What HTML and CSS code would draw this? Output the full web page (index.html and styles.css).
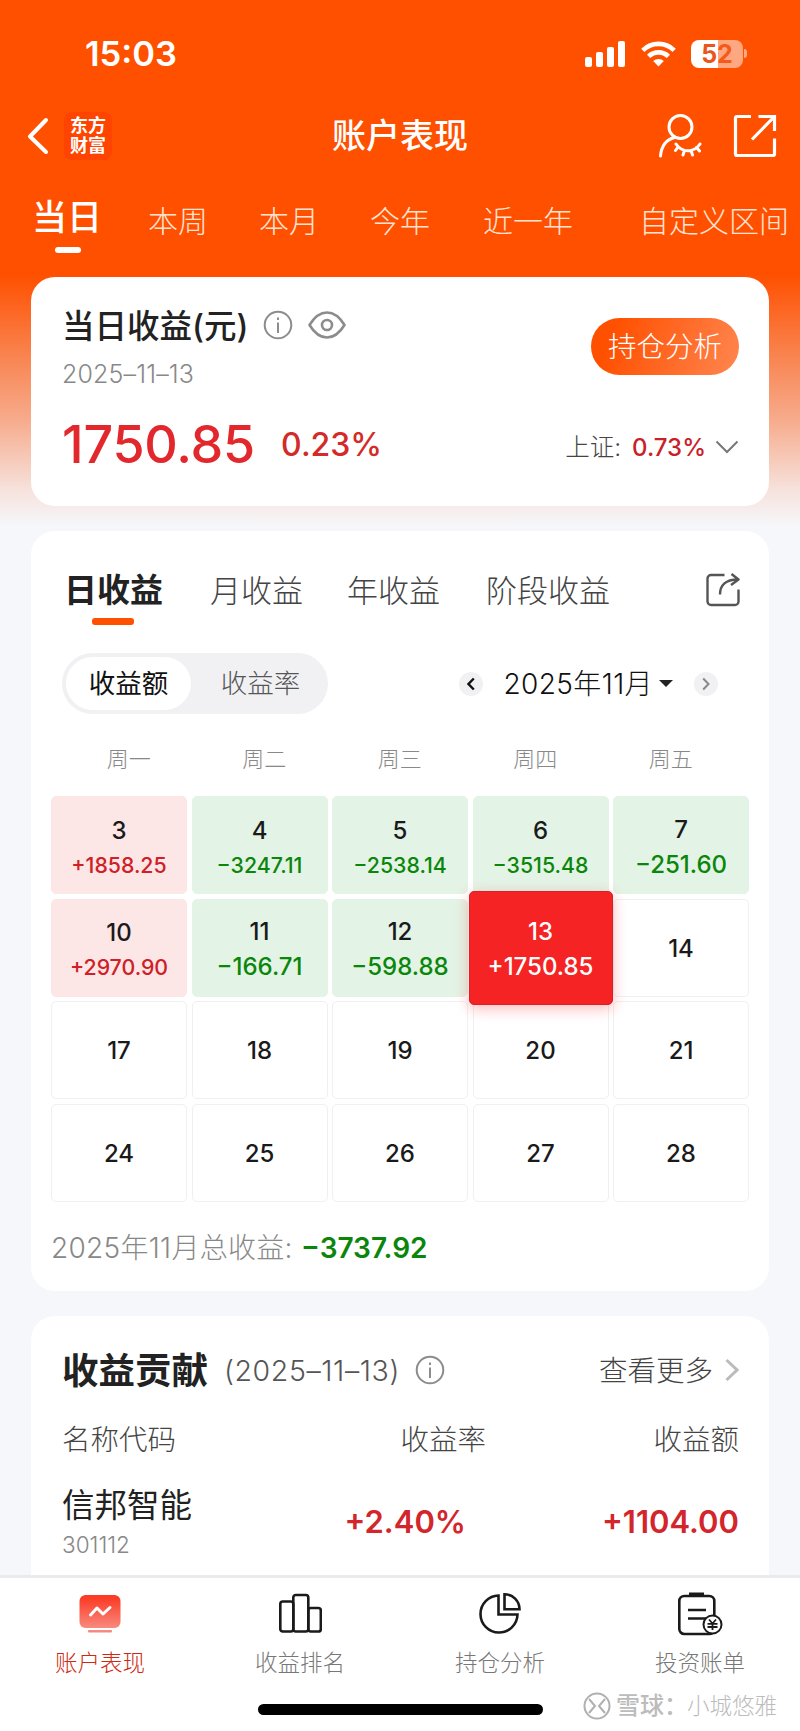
FILE: index.html
```html
<!DOCTYPE html>
<html lang="zh-CN">
<head>
  <meta charset="UTF-8">
  <meta name="viewport" content="width=device-width, initial-scale=1.0">
  <title>账户表现</title>
  <link rel="stylesheet" href="styles.css">
</head>
<body>
  <div class="page">

    <!-- Status bar -->
    <div class="status-bar">
      <span class="time">15:03</span>
      <div class="status-icons">
        <svg class="signal" width="41" height="26" viewBox="0 0 41 26" fill="#fff">
          <rect x="0" y="16" width="7" height="10" rx="2"/>
          <rect x="11" y="11" width="7" height="15" rx="2"/>
          <rect x="22" y="6" width="7" height="20" rx="2"/>
          <rect x="33" y="0" width="7" height="26" rx="2"/>
        </svg>
        <svg class="wifi" width="35" height="26" viewBox="0 0 35 26" fill="none" stroke="#fff" stroke-width="4.6">
          <path d="M1.8 9.3a22.5 22.5 0 0 1 31.4 0"/>
          <path d="M7.6 15.4a14.3 14.3 0 0 1 19.8 0"/>
          <path d="M17.5 25.5l-5.3-5.4a7.6 7.6 0 0 1 10.6 0z" fill="#fff" stroke="none"/>
        </svg>
        <div class="battery"><span>5</span><span class="low">2</span></div>
        <i class="battery-tip"></i>
      </div>
    </div>

    <!-- Title bar -->
    <header class="header">
      <div class="header-left">
        <svg width="22" height="38" viewBox="0 0 22 38" fill="none" stroke="#fff" stroke-width="4" stroke-linecap="round" stroke-linejoin="round">
          <path d="M19 3L3 19.5 19 35"/>
        </svg>
        <div class="logo">东方<br>财富</div>
      </div>
      <h1>账户表现</h1>
      <div class="header-right">
        <svg width="44" height="46" viewBox="0 0 44 46" fill="none" stroke="#fff" stroke-width="3" stroke-linecap="round">
          <circle cx="22.5" cy="14" r="11.5"/>
          <path d="M2.5 43C3.5 32 9 26.5 16.5 24.5"/>
          <path d="M18 31c6 9 18 9 24 0M20 34l-2.5 3.5M26.5 37.5L25 42M33 37.5l1.5 4.5M38.5 34.5l3 3.5"/>
        </svg>
        <svg width="44" height="44" viewBox="0 0 44 44" fill="none" stroke="#fff" stroke-width="3.2">
          <path d="M18 2.5H4A1.500 1.500 0 0 0 2.500 4v36A1.500 1.500 0 0 0 4 41.500h36a1.500 1.500 0 0 0 1.500-1.500V24.500"/>
          <path d="M25.500 2.500h16V17M41 3L19 25.500"/>
        </svg>
      </div>
    </header>

    <!-- Period tabs -->
    <nav class="period-tabs">
      <a class="active">当日</a>
      <a>本周</a>
      <a>本月</a>
      <a>今年</a>
      <a class="year">近一年</a>
      <a class="custom">自定义区间</a>
    </nav>

    <main class="content">
      <!-- Profit summary -->
      <section class="card summary">
        <div class="summary-left">
          <div class="summary-title">
            <span>当日收益(元)</span>
            <svg class="info" width="30" height="30" viewBox="0 0 30 30" fill="none" stroke="#8c8c8c" stroke-width="2">
              <circle cx="15" cy="15" r="13.3"/>
              <path d="M15 12.5V23M15 7.5v2.5"/>
            </svg>
            <svg class="eye" width="38" height="28" viewBox="0 0 38 28" fill="none" stroke="#8c8c8c" stroke-width="2.6" stroke-linejoin="round">
              <path d="M1.5 14C7 5 13 1.5 19 1.5S31 5 36.5 14C31 23 25 26.5 19 26.5S7 23 1.5 14z"/>
              <circle cx="19" cy="14" r="5"/>
            </svg>
          </div>
          <div class="date">2025–11–13</div>
          <div class="amount-row">
            <span class="amount">1750.85</span>
            <span class="percent">0.23%</span>
          </div>
        </div>
        <div class="summary-right">
          <a class="btn-analysis">持仓分析</a>
          <div class="index-row">
            <span>上证:</span>
            <b>0.73%</b>
            <svg width="24" height="14" viewBox="0 0 24 14" fill="none" stroke="#777" stroke-width="2"><path d="M1.5 1.5L12 12 22.5 1.5"/></svg>
          </div>
        </div>
      </section>

      <!-- Profit calendar -->
      <section class="card calendar">
        <div class="profit-tabs">
          <a class="active">日收益</a>
          <a class="month">月收益</a>
          <a class="annual">年收益</a>
          <a class="stage">阶段收益</a>
          <svg class="share" width="34" height="34" viewBox="0 0 34 34" fill="none" stroke="#555" stroke-width="2.4" stroke-linejoin="round">
            <path d="M18.5 2H5a3.5 3.5 0 0 0-3.5 3.5v23A3.5 3.5 0 0 0 5 32h24a3.5 3.5 0 0 0 3.5-3.5V16.5"/>
            <path d="M14 21.5C14 12 20 6.5 31.5 6.5M25.5 1l7 5.500-7.500 5.500"/>
          </svg>
        </div>

        <div class="controls">
          <div class="toggle">
            <span class="on">收益额</span>
            <span>收益率</span>
          </div>
          <div class="month-picker">
            <span class="arrow"><svg width="8" height="14" viewBox="0 0 8 14" fill="none" stroke="#111" stroke-width="2.4"><path d="M6.8 1.5L1.5 7l5.3 5.5"/></svg></span>
            <span class="month-text">2025年11月</span>
            <i class="caret"></i>
            <span class="arrow next"><svg width="8" height="14" viewBox="0 0 8 14" fill="none" stroke="#888" stroke-width="2"><path d="M1.2 1.5L6.5 7l-5.3 5.5"/></svg></span>
          </div>
        </div>

        <div class="weekdays">
          <span>周一</span><span>周二</span><span>周三</span><span>周四</span><span>周五</span>
        </div>

        <div class="days">
          <div class="day up"><b>3</b><span>+1858.25</span></div>
          <div class="day down"><b>4</b><span>−3247.11</span></div>
          <div class="day down"><b>5</b><span>−2538.14</span></div>
          <div class="day down"><b>6</b><span>−3515.48</span></div>
          <div class="day down big"><b>7</b><span>−251.60</span></div>
          <div class="day up"><b>10</b><span>+2970.90</span></div>
          <div class="day down big"><b>11</b><span>−166.71</span></div>
          <div class="day down big"><b>12</b><span>−598.88</span></div>
          <div class="day selected big"><b>13</b><span>+1750.85</span></div>
          <div class="day"><b>14</b></div>
          <div class="day"><b>17</b></div>
          <div class="day"><b>18</b></div>
          <div class="day"><b>19</b></div>
          <div class="day"><b>20</b></div>
          <div class="day"><b>21</b></div>
          <div class="day"><b>24</b></div>
          <div class="day"><b>25</b></div>
          <div class="day"><b>26</b></div>
          <div class="day"><b>27</b></div>
          <div class="day"><b>28</b></div>
        </div>

        <div class="total">2025年11月总收益: <b>−3737.92</b></div>
      </section>

      <!-- Contribution list -->
      <section class="card contribution">
        <div class="contribution-head">
          <h2>收益贡献</h2>
          <span class="head-date">(2025–11–13)</span>
          <svg class="info" width="30" height="30" viewBox="0 0 30 30" fill="none" stroke="#8c8c8c" stroke-width="2">
            <circle cx="15" cy="15" r="13.3"/>
            <path d="M15 12.5V23M15 7.5v2.5"/>
          </svg>
          <a class="more">查看更多</a>
          <svg width="14" height="24" viewBox="0 0 14 24" fill="none" stroke="#bbb" stroke-width="3"><path d="M1.5 2L12 12 1.5 22"/></svg>
        </div>
        <div class="row row-head">
          <span>名称代码</span><span>收益率</span><span>收益额</span>
        </div>
        <div class="row row-stock">
          <div>
            <div class="stock-name">信邦智能</div>
            <div class="stock-code">301112</div>
          </div>
          <b>+2.40%</b>
          <b>+1104.00</b>
        </div>
      </section>
    </main>

    <!-- Bottom navigation -->
    <footer class="tab-bar">
      <a class="active">
        <svg width="44" height="44" viewBox="0 0 44 44">
          <defs>
            <linearGradient id="red" x1="0" y1="0" x2="0" y2="1">
              <stop offset="0.1" stop-color="#fb3d27"/>
              <stop offset="1" stop-color="#f88a7e"/>
            </linearGradient>
          </defs>
          <rect x="1.5" y="3" width="41" height="33" rx="6" fill="url(#red)"/>
          <path d="M12.5 23l6.5-7 6 6 7-6.5" fill="none" stroke="#fff" stroke-width="3" stroke-linecap="round" stroke-linejoin="round"/>
          <rect x="10" y="38" width="24" height="2.6" rx="1" fill="#f58a80"/>
        </svg>
        <span>账户表现</span>
      </a>
      <a>
        <svg width="44" height="44" viewBox="0 0 44 44" fill="none" stroke="#1a1a1a" stroke-width="2.6">
          <rect x="2.3" y="9.5" width="13" height="30" rx="2.5"/>
          <rect x="15.3" y="3" width="15" height="36.5" rx="2.5"/>
          <rect x="30.3" y="16" width="12.5" height="23.5" rx="2.5"/>
        </svg>
        <span>收益排名</span>
      </a>
      <a>
        <svg width="44" height="44" viewBox="0 0 44 44" fill="none" stroke="#1a1a1a" stroke-width="2.6">
          <path d="M20.5 3.5A18.5 18.5 0 1 0 39.5 22.5H20.5z"/>
          <path d="M26.5 2.3v15h15A15 15 0 0 0 26.5 2.3z"/>
        </svg>
        <span>持仓分析</span>
      </a>
      <a>
        <svg width="46" height="44" viewBox="0 0 46 44" fill="none" stroke="#1a1a1a" stroke-width="2.6">
          <rect x="2.3" y="4" width="35" height="38" rx="5"/>
          <path d="M12 2.5h15" stroke-width="4"/>
          <path d="M11 18h18M11 26.5h18"/>
          <circle cx="35.5" cy="32.5" r="9" fill="#fff" stroke-width="2"/>
          <path d="M32 27.5l3.5 4 3.5-4M35.5 31.5V38M30.5 31.8h10M30.5 35h10" stroke-width="1.8"/>
        </svg>
        <span>投资账单</span>
      </a>
      <i class="home-indicator"></i>
      <div class="watermark">
        <svg width="28" height="28" viewBox="0 0 28 28" fill="none" stroke="#b0b0b0" stroke-width="2">
          <circle cx="14" cy="14" r="12.5"/>
          <path d="M6 7l6 7-6 7M22 7l-6 7 6 7"/>
        </svg>
        <b>雪球：</b><span>小城悠雅</span>
      </div>
    </footer>
  </div>
</body>
</html>
```

FILE: styles.css
```css
* {
  box-sizing: border-box;
}

body {
  margin: 0;
  background-color: #f6f7fa;
  font-family: Inter, "Noto Sans CJK SC", sans-serif;
  color: #222222;
}

h1, h2 {
  margin: 0;
}

svg {
  display: block;
  flex-shrink: 0;
}

a, span, b {
  white-space: nowrap;
}

.page {
  width: 800px;
  height: 1731px;
  display: flex;
  flex-direction: column;
  overflow: hidden;
  background: linear-gradient(to bottom, #ff5000 0, #ff5000 275px, #f9834f 355px, #f7ab8c 420px, #f6e2dc 490px, #f6f7fa 526px);
}

/* Status bar */
.status-bar {
  height: 107px;
  display: flex;
  align-items: center;
  justify-content: space-between;
  padding: 0 53px 0 85px;
  color: #ffffff;
}

.time {
  font-size: 34.5px;
  font-weight: 600;
}

.status-icons {
  display: flex;
  align-items: center;
}

.wifi {
  margin-left: 15px;
}

.battery {
  width: 52px;
  height: 28px;
  margin-left: 15px;
  border-radius: 8px;
  background: linear-gradient(to right, #ffffff 51%, #ffa780 51%);
  display: flex;
  align-items: center;
  justify-content: center;
  font-size: 25px;
  font-weight: 700;
  line-height: 28px;
  color: #e8561c;
}

.battery .low {
  color: #f65a1a;
}

.battery-tip {
  width: 3px;
  height: 9px;
  margin-left: 1px;
  border-radius: 0 4px 4px 0;
  background-color: #ffa780;
}

/* Title bar */
.header {
  height: 58px;
  display: grid;
  grid-template-columns: 1fr auto 1fr;
  align-items: center;
  padding: 0 23px;
  color: #ffffff;
}

.header h1 {
  font-size: 34px;
  font-weight: 500;
  line-height: 58px;
}

.header-left {
  display: flex;
  align-items: center;
  gap: 15px;
  padding-left: 4px;
}

.logo {
  width: 48px;
  height: 48px;
  padding-top: 4px;
  border-radius: 8px;
  background-color: #ff4400;
  font-size: 18px;
  font-weight: 700;
  line-height: 20px;
  text-align: center;
}

.header-right {
  display: flex;
  align-items: center;
  justify-content: flex-end;
  gap: 31px;
}

/* Period tabs */
.period-tabs {
  height: 112px;
  display: flex;
  align-items: flex-start;
  padding-left: 32px;
  color: #ffe3d3;
}

.period-tabs a {
  margin-left: 51px;
  padding-top: 34px;
  font-size: 30px;
  font-weight: 300;
  line-height: 44px;
}

.period-tabs .active {
  position: relative;
  margin: 0 -5px 0 0;
  padding-top: 28px;
  font-size: 35px;
  font-weight: 500;
  line-height: 48px;
  color: #ffffff;
}

.period-tabs .active::after {
  content: '';
  position: absolute;
  left: 23px;
  top: 82px;
  width: 26px;
  height: 6px;
  border-radius: 3px;
  background-color: #ffffff;
}

.period-tabs .year {
  margin-left: 53px;
}

.period-tabs .custom {
  margin-left: 66px;
}

/* Cards */
.content {
  flex: 1;
  min-height: 0;
  display: flex;
  flex-direction: column;
  gap: 25px;
  padding: 0 31px;
}

.card {
  background-color: #ffffff;
  border-radius: 24px;
  flex-shrink: 0;
}

/* Profit summary */
.summary {
  height: 229px;
  display: flex;
  justify-content: space-between;
  padding: 24px 30px 0 31px;
}

.summary-title {
  display: flex;
  align-items: center;
  height: 48px;
  font-size: 32.5px;
  font-weight: 500;
}

.summary-title span {
  padding-bottom: 4px;
}

.summary-title .info {
  margin-left: 15px;
}

.summary-title .eye {
  margin-left: 15px;
}

.date {
  height: 32px;
  margin-top: 9px;
  font-size: 25px;
  font-weight: 300;
  line-height: 32px;
  letter-spacing: 0.15px;
  color: #888888;
}

.amount-row {
  display: flex;
  align-items: center;
  margin-top: 23px;
  line-height: 64px;
  color: #e2282c;
}

.amount {
  font-size: 52px;
  font-weight: 500;
  letter-spacing: -0.2px;
}

.percent {
  margin-left: 26px;
  font-size: 32px;
  font-weight: 500;
  color: #d32a2a;
}

.summary-right {
  display: flex;
  flex-direction: column;
  align-items: flex-end;
}

.btn-analysis {
  width: 148px;
  height: 57px;
  margin-top: 17px;
  border-radius: 29px;
  background: linear-gradient(110deg, #ff5000 15%, #ff8650 100%);
  font-size: 28.5px;
  font-weight: 300;
  line-height: 57px;
  text-align: center;
  color: #ffffff;
}

.index-row {
  display: flex;
  align-items: center;
  height: 36px;
  margin-top: 54px;
  font-size: 24.5px;
  font-weight: 300;
  color: #444444;
}

.index-row span {
  padding-bottom: 3px;
}

.index-row b {
  margin: 0 9px 0 11px;
  font-size: 24px;
  font-weight: 500;
  color: #c9202a;
}

/* Profit calendar */
.calendar {
  height: 760px;
}

.profit-tabs {
  display: flex;
  align-items: center;
  height: 118px;
  padding: 0 29px 0 33px;
  font-size: 31px;
  font-weight: 300;
  color: #444444;
}

.profit-tabs a {
  padding-bottom: 4px;
}

.profit-tabs .active {
  position: relative;
  font-size: 33px;
  font-weight: 700;
  color: #222222;
}

.profit-tabs .active::after {
  content: '';
  position: absolute;
  left: 28px;
  bottom: -9px;
  width: 42px;
  height: 7px;
  border-radius: 3px;
  background-color: #ff5000;
}

.profit-tabs .month {
  margin-left: 47px;
}

.profit-tabs .annual {
  margin-left: 44px;
}

.profit-tabs .stage {
  margin-left: 46px;
}

.profit-tabs .share {
  margin-left: auto;
}

.controls {
  display: flex;
  align-items: center;
  justify-content: space-between;
  margin: 4px 51px 0 31px;
}

.toggle {
  width: 266px;
  height: 61px;
  display: flex;
  padding: 4px;
  border-radius: 31px;
  background-color: #f1f1f4;
  font-size: 26.5px;
  font-weight: 300;
  line-height: 53px;
  color: #555555;
}

.toggle span {
  flex: 1;
  padding-left: 6px;
  text-align: center;
}

.toggle .on {
  flex: none;
  width: 125px;
  padding: 0;
  border-radius: 27px;
  background-color: #ffffff;
  font-weight: 400;
  color: #111111;
}

.month-picker {
  display: flex;
  align-items: center;
  font-size: 28px;
  font-weight: 300;
  color: #111111;
}

.arrow {
  width: 24px;
  height: 24px;
  display: flex;
  align-items: center;
  justify-content: center;
  border-radius: 50%;
  background-color: #f1f1f4;
}

.month-text {
  margin-left: 20px;
  padding-bottom: 3px;
  letter-spacing: 0.4px;
}

.caret {
  margin: 0 21px 0 6px;
  border: 7px solid transparent;
  border-top: 7px solid #222222;
  border-bottom: 0;
}

.weekdays {
  display: grid;
  grid-template-columns: repeat(5, 135.5px);
  margin: 29px 0 0 30px;
  font-size: 22px;
  font-weight: 300;
  line-height: 32px;
  text-align: center;
  color: #888888;
}

.days {
  display: grid;
  grid-template-columns: repeat(5, 1fr);
  grid-auto-rows: 98px;
  gap: 4.5px;
  margin: 21px 20px 0;
}

.day {
  display: flex;
  flex-direction: column;
  align-items: center;
  justify-content: center;
  padding-top: 2px;
  border: 1px solid #f0f0f1;
  border-radius: 5px;
  background-color: #ffffff;
}

.day b {
  font-size: 24px;
  font-weight: 500;
  line-height: 34px;
  color: #1a1a1a;
}

.day span {
  font-size: 21.3px;
  font-weight: 500;
  line-height: 34px;
}

.day.big span {
  font-size: 24px;
  line-height: 36px;
}

.day.up {
  padding-top: 5px;
  border-color: #fde6e6;
  background-color: #fde6e6;
  color: #cf2027;
}

.day.down {
  padding-top: 5px;
  border-color: #e3f3e5;
  background-color: #e3f3e5;
  color: #0a860a;
}

.day.selected {
  position: relative;
  z-index: 1;
  margin: -8px -4px;
  padding-top: 4px;
  border-color: #d92028;
  background-color: #f52324;
  box-shadow: 0 4px 14px rgba(245, 35, 36, 0.3);
  color: #ffffff;
}

.day.selected b {
  color: #ffffff;
}

.total {
  margin: 26px 0 0 20px;
  font-size: 28px;
  font-weight: 300;
  line-height: 40px;
  letter-spacing: 0.3px;
  color: #888888;
}

.total b {
  font-weight: 600;
  letter-spacing: 0;
  color: #0a860a;
}

/* Contribution list */
.contribution {
  height: 320px;
  padding: 0 30px 0 31px;
}

.contribution-head {
  display: flex;
  align-items: center;
  height: 108px;
}

.contribution-head h2 {
  padding-bottom: 4px;
  font-size: 36.5px;
  font-weight: 700;
}

.head-date {
  margin-left: 16px;
  font-size: 28.5px;
  font-weight: 300;
  letter-spacing: 0.6px;
  color: #555555;
}

.contribution-head .info {
  margin-left: 15px;
}

.contribution-head .more {
  margin: 0 12px 0 auto;
  padding-bottom: 4px;
  font-size: 28.5px;
  font-weight: 300;
  color: #444444;
}

.row {
  display: grid;
  align-items: center;
}

.row > :nth-child(n+2) {
  text-align: right;
}

.row-head {
  grid-template-columns: 1fr 197px 253px;
  margin-top: -4px;
  font-size: 28.5px;
  font-weight: 300;
  line-height: 40px;
  color: #444444;
}

.row-stock {
  grid-template-columns: 1fr 197px 273px;
  margin-top: 22px;
}

.row-stock b {
  font-size: 31px;
  font-weight: 600;
  color: #d3252c;
}

.stock-name {
  font-size: 32.5px;
  line-height: 48px;
}

.stock-code {
  font-size: 22.5px;
  font-weight: 300;
  line-height: 30px;
  color: #888888;
}

/* Bottom navigation */
.tab-bar {
  position: relative;
  height: 156px;
  flex-shrink: 0;
  display: grid;
  grid-template-columns: repeat(4, 1fr);
  border-top: 3px solid #ebebed;
  background-color: #ffffff;
  font-size: 22.5px;
  font-weight: 300;
  color: #777777;
}

.tab-bar a {
  display: flex;
  flex-direction: column;
  align-items: center;
  padding-top: 14px;
}

.tab-bar a span {
  margin-top: 11px;
  line-height: 32px;
}

.tab-bar .active {
  color: #cc2a12;
}

.home-indicator {
  position: absolute;
  left: 258px;
  top: 126px;
  width: 285px;
  height: 11px;
  border-radius: 6px;
  background-color: #000000;
}

.watermark {
  position: absolute;
  left: 583px;
  top: 112px;
  display: flex;
  align-items: center;
  font-size: 24px;
  line-height: 32px;
  color: #bcbcbc;
}

.watermark b {
  width: 71px;
  margin-left: 5px;
  overflow: hidden;
  font-weight: 500;
}

.watermark span {
  font-size: 22.5px;
}
```
